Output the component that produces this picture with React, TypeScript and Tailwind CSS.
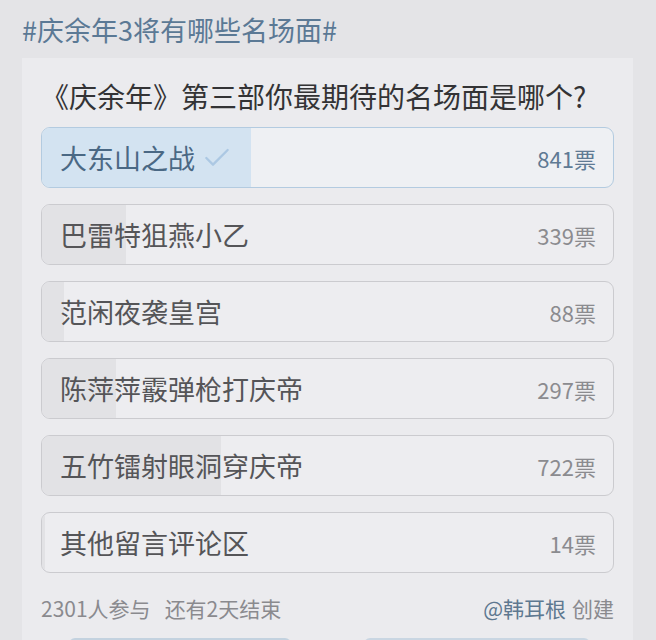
import { Check } from "lucide-react"

// Poll options with vote counts
interface PollOption {
  label: string;
  votes: number;
  chosen?: boolean;
}

const options: PollOption[] = [
  { label: "大东山之战", votes: 841, chosen: true },
  { label: "巴雷特狙燕小乙", votes: 339 },
  { label: "范闲夜袭皇宫", votes: 88 },
  { label: "陈萍萍霰弹枪打庆帝", votes: 297 },
  { label: "五竹镭射眼洞穿庆帝", votes: 722 },
  { label: "其他留言评论区", votes: 14 },
]

const total = 2301

function OptionRow({ item }: { item: PollOption }) {
  const pct = (item.votes / total) * 100
  return (
    <div
      className={
        "relative h-[61px] shrink-0 rounded-[9px] border overflow-hidden flex items-center justify-between pl-[18px] pr-[17px] " +
        (item.chosen ? "border-[#b3cbe0] bg-[#eef0f3]" : "border-[#cbcbcf] bg-[#ededf0]")
      }
    >
      {/* progress fill */}
      <div
        className={"absolute left-0 top-0 bottom-0 " + (item.chosen ? "bg-[#d3e3f1]" : "bg-[#e2e2e5]")}
        style={{ width: `${pct}%` }}
      />
      <div className="relative flex items-center gap-[6px]">
        <span className={"text-[27px] leading-[34px] " + (item.chosen ? "text-[#4a6884]" : "text-[#555558]")}>
          {item.label}
        </span>
        {item.chosen && <Check className="w-[32px] h-[32px] text-[#acc8e3]" strokeWidth={1.75} />}
      </div>
      <span className={"relative text-[22px] leading-[28px] " + (item.chosen ? "text-[#5f7a93]" : "text-[#8b8b8f]")}>
        {item.votes}票
      </span>
    </div>
  )
}

export default function App() {
  return (
    <div
      className="w-[656px] h-[640px] overflow-hidden bg-[#e4e4e7] flex flex-col"
      style={{ fontFamily: '"Noto Sans CJK SC", "Noto Sans", sans-serif' }}
    >
      <div className="shrink-0 pt-[13px] pl-[22px] h-[58px] text-[27px] leading-[34px] text-[#5b7995]">
        #庆余年3将有哪些名场面#
      </div>

      <div className="ml-[22px] mr-[23px] flex-1 bg-[#ebebee] px-[19px] pt-[20px] flex flex-col">
        <div className="text-[28px] leading-[36px] text-[#333335]">
          《庆余年》第三部你最期待的名场面是哪个?
        </div>

        <div className="mt-[13px] flex flex-col gap-[16px]">
          {options.map((o) => (
            <OptionRow key={o.label} item={o} />
          ))}
        </div>

        <div className="mt-[21px] flex items-center justify-between text-[21px] leading-[28px]">
          <span className="text-[#8a8a8e]">
            2301人参与<span className="ml-[14px]">还有2天结束</span>
          </span>
          <span>
            <span className="text-[#5e7890]">@韩耳根</span>
            <span className="ml-[6px] text-[#8a8a8e]">创建</span>
          </span>
        </div>

        <div className="mt-[16px] flex gap-[73px] pl-[28px]">
          <div className="w-[222px] h-[10px] rounded-t-[6px] bg-[#c3d2df]" />
          <div className="w-[226px] h-[10px] rounded-t-[6px] bg-[#c9d6e2]" />
        </div>
      </div>
    </div>
  )
}
